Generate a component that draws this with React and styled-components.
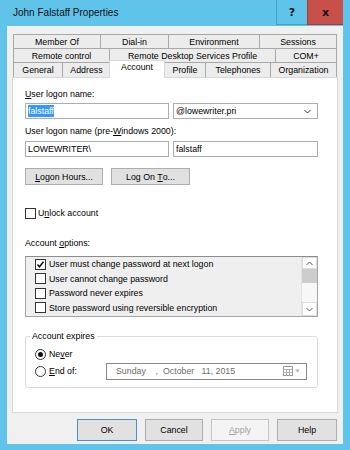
import styled, { createGlobalStyle } from 'styled-components';

const FONT = `"Liberation Sans", Arial, sans-serif`;

const GlobalStyle = createGlobalStyle`
  body {
    margin: 0;
    background: #ffffff;
    font-family: ${FONT};
  }
`;

const Window = styled.div`
  width: 350px;
  height: 450px;
  box-sizing: border-box;
  display: flex;
  flex-direction: column;
  background: #5fc3ea;
  padding: 0 7px 6px 7px;
  font-family: ${FONT};
  font-size: 8.8px;
  color: #000;
`;

const TitleBar = styled.div`
  height: 26px;
  display: flex;
  align-items: flex-start;
`;

const Title = styled.div`
  flex: 1;
  padding: 7px 0 0 6px;
  font-size: 10px;
  line-height: 12px;
  color: #111;
`;

const CaptionButton = styled.div`
  width: ${(p) => p.$w}px;
  height: 25px;
  display: flex;
  align-items: center;
  justify-content: center;
  background: ${(p) => p.$bg};
  box-sizing: border-box;
  border-left: 1px solid ${(p) => p.$edge};
  border-bottom: 1px solid ${(p) => p.$edge};
  font-family: "DejaVu Sans", sans-serif;
  font-weight: bold;
  font-size: 11px;
  color: #111;
`;

const Body = styled.div`
  flex: 1;
  background: #f0f0f0;
  padding: 8px 5px 3px 5px;
  display: flex;
  flex-direction: column;
`;

const Tabs = styled.div`
  margin: 0 1px;
  display: flex;
  flex-direction: column;
`;

const TabRow = styled.div`
  display: flex;
  height: ${(p) => p.$h}px;
`;

const Tab = styled.div`
  width: ${(p) => p.$w}px;
  box-sizing: border-box;
  border-left: 1px solid #a8a8a8;
  border-top: 1px solid #a8a8a8;
  background: #ececec;
  display: flex;
  align-items: center;
  justify-content: center;
  white-space: nowrap;
  &:last-child {
    border-right: 1px solid #a8a8a8;
  }
`;

const ActiveTab = styled(Tab)`
  position: relative;
  z-index: 1;
  width: ${(p) => p.$w + 2}px;
  margin: -2px -1px -1px -1px;
  background: #fff;
  border: 1px solid #d9d9d9;
  border-bottom: none;
  align-items: flex-start;
  padding-top: 1px;
`;

const Panel = styled.div`
  height: 336px;
  box-sizing: border-box;
  background: #fff;
  border: 1px solid #d9d9d9;
  padding: 10px 0 0 12px;
  display: flex;
  flex-direction: column;
`;

const Column = styled.div`
  width: 293px;
  display: flex;
  flex-direction: column;
`;

const Label = styled.div`
  line-height: 12px;
  height: 12px;
  margin-top: ${(p) => p.$mt || 0}px;
  white-space: nowrap;
`;

const FieldRow = styled.div`
  display: flex;
  gap: 4px;
  margin-top: ${(p) => p.$mt || 0}px;
`;

const TextBox = styled.div`
  width: ${(p) => p.$w}px;
  height: 16px;
  box-sizing: border-box;
  border: 1px solid #abadb3;
  background: #fff;
  display: flex;
  align-items: center;
  padding: 0 2px;
  white-space: nowrap;
`;

const Selected = styled.span`
  background: #3399ff;
  color: #fff;
  line-height: 12px;
`;

const Combo = styled(TextBox)`
  justify-content: space-between;
  padding-right: 6px;
`;

const ButtonRow = styled.div`
  display: flex;
  gap: ${(p) => p.$gap}px;
  margin-top: ${(p) => p.$mt || 0}px;
  margin-right: ${(p) => p.$mr || 0}px;
  justify-content: ${(p) => p.$justify || 'flex-start'};
`;

const Button = styled.div`
  width: ${(p) => p.$w}px;
  height: ${(p) => p.$h}px;
  box-sizing: border-box;
  background: ${(p) => (p.$disabled ? '#f4f4f4' : '#e1e1e1')};
  border: 1px solid
    ${(p) => (p.$default ? '#4a90d0' : p.$disabled ? '#c4c4c4' : '#adadad')};
  color: ${(p) => (p.$disabled ? '#a0a0a0' : '#000')};
  display: flex;
  align-items: center;
  justify-content: center;
  white-space: pre;
`;

const CheckRow = styled.div`
  display: flex;
  align-items: center;
  gap: ${(p) => p.$gap || 3}px;
  height: ${(p) => p.$h || 12}px;
  margin-top: ${(p) => p.$mt || 0}px;
  white-space: nowrap;
`;

const Box = styled.span`
  width: 11px;
  height: 11px;
  box-sizing: border-box;
  border: 1px solid #333;
  background: #fff;
  display: flex;
  align-items: center;
  justify-content: center;
  flex-shrink: 0;
`;

const Radio = styled.span`
  width: 11px;
  height: 11px;
  box-sizing: border-box;
  border: 1px solid #333;
  border-radius: 50%;
  background: #fff;
  display: flex;
  align-items: center;
  justify-content: center;
  flex-shrink: 0;
  &::after {
    content: '';
    width: 5px;
    height: 5px;
    border-radius: 50%;
    background: ${(p) => (p.$on ? '#111' : 'transparent')};
  }
`;

const ListBox = styled.div`
  margin-top: 7px;
  height: 61px;
  box-sizing: border-box;
  border: 1px solid #a6a6a6;
  border-top-color: #8c8c8c;
  background: #efefef;
  display: flex;
`;

const ListItems = styled.div`
  flex: 1;
  padding-left: 9px;
  display: flex;
  flex-direction: column;
`;

const ListItem = styled(CheckRow)`
  height: 14.5px;
`;

const ScrollBar = styled.div`
  width: 15px;
  background: #f7f7f7;
  border-left: 1px solid #e2e2e2;
  display: flex;
  flex-direction: column;
`;

const ScrollArrow = styled.div`
  height: ${(p) => p.$h}px;
  background: #fff;
  border: 1px solid #dcdcdc;
  box-sizing: border-box;
  display: flex;
  align-items: center;
  justify-content: center;
`;

const Thumb = styled.div`
  height: 14px;
  background: #cdcdcd;
`;

const Track = styled.div`
  flex: 1;
`;

const Group = styled.fieldset`
  margin: 13px 0 0 0;
  padding: 6px 0 8px 9px;
  border: 1px solid #dcdcdc;
  border-radius: 3px;
  display: flex;
  flex-direction: column;
`;

const Legend = styled.legend`
  padding: 0 2px;
  margin-left: -5px;
  line-height: 12px;
`;

const DateRow = styled.div`
  display: flex;
  align-items: center;
  margin-top: 3px;
  height: 16px;
`;

const DateLabel = styled(CheckRow)`
  width: 71px;
`;

const DatePicker = styled.div`
  width: 201px;
  height: 17px;
  box-sizing: border-box;
  border: 1px solid #8a8a8a;
  background: #fff;
  display: flex;
  align-items: center;
  justify-content: space-between;
  padding: 0 4px 0 9px;
  color: #6d6d6d;
  white-space: pre;
`;

const U = styled.span`
  text-decoration: underline;
`;

const Chevron = ({ up, color = '#333' }) => (
  <svg width="7" height="5" viewBox="0 0 7 5">
    <polyline
      points={up ? '0.5,4 3.5,1 6.5,4' : '0.5,1 3.5,4 6.5,1'}
      fill="none"
      stroke={color}
      strokeWidth="1"
    />
  </svg>
);

const Check = () => (
  <svg width="9" height="9" viewBox="0 0 9 9">
    <polyline points="1.5,4.5 3.5,6.8 7.5,1.8" fill="none" stroke="#111" strokeWidth="1.5" />
  </svg>
);

const CalendarIcon = () => (
  <svg width="19" height="10" viewBox="0 0 19 10">
    <rect x="0.5" y="0.5" width="9" height="9" fill="#fff" stroke="#9a9a9a" />
    <path d="M0.5 3.5H9.5M0.5 6.5H9.5M3.5 3.5V9.5M6.5 3.5V9.5" stroke="#b0b0b0" />
    <polygon points="12,3.5 17,3.5 14.5,6.5" fill="#b5b5b5" />
  </svg>
);

const rows = [
  [
    ['Member Of', 87],
    ['Dial-in', 68],
    ['Environment', 91],
    ['Sessions', 78],
  ],
  [
    ['Remote control', 96],
    ['Remote Desktop Services Profile', 166],
    ['COM+', 62],
  ],
  [
    ['General', 49],
    ['Address', 48],
    ['Account', 54, true],
    ['Profile', 41],
    ['Telephones', 65],
    ['Organization', 67],
  ],
];

const options = [
  ['User must change password at next logon', true],
  ['User cannot change password', false],
  ['Password never expires', false],
  ['Store password using reversible encryption', false],
];

export default function App() {
  return (
    <>
      <GlobalStyle />
      <Window>
        <TitleBar>
          <Title>John Falstaff Properties</Title>
          <CaptionButton $w={31} $bg="#5fc3ea" $edge="#3d9fcc">
            ?
          </CaptionButton>
          <CaptionButton $w={36} $bg="#c8504a" $edge="#a63c37">
            x
          </CaptionButton>
        </TitleBar>
        <Body>
          <Tabs>
            {rows.map((row, i) => (
              <TabRow key={i} $h={i === 2 ? 15 : 14}>
                {row.map(([name, w, active]) =>
                  active ? (
                    <ActiveTab key={name} $w={w}>
                      {name}
                    </ActiveTab>
                  ) : (
                    <Tab key={name} $w={w}>
                      {name}
                    </Tab>
                  )
                )}
              </TabRow>
            ))}
          </Tabs>
          <Panel>
            <Column>
              <Label>
                <U>U</U>ser logon name:
              </Label>
              <FieldRow $mt={3}>
                <TextBox $w={144}>
                  <Selected>falstaff</Selected>
                </TextBox>
                <Combo $w={145}>
                  <span>@lowewriter.pri</span>
                  <Chevron />
                </Combo>
              </FieldRow>
              <Label $mt={6}>
                User logon name (pre-<U>W</U>indows 2000):
              </Label>
              <FieldRow $mt={4}>
                <TextBox $w={144}>LOWEWRITER\</TextBox>
                <TextBox $w={145}>falstaff</TextBox>
              </FieldRow>
              <ButtonRow $gap={8} $mt={11}>
                <Button $w={78} $h={17}>
                  <U>L</U>ogon Hours...
                </Button>
                <Button $w={79} $h={17}>
                  {'Log On '}
                  <U>T</U>o...
                </Button>
              </ButtonRow>
              <CheckRow $mt={22} $gap={2}>
                <Box />
                <span>
                  U<U>n</U>lock account
                </span>
              </CheckRow>
              <Label $mt={18}>
                Account <U>o</U>ptions:
              </Label>
              <ListBox>
                <ListItems>
                  {options.map(([text, on]) => (
                    <ListItem key={text}>
                      <Box>{on && <Check />}</Box>
                      <span>{text}</span>
                    </ListItem>
                  ))}
                </ListItems>
                <ScrollBar>
                  <ScrollArrow $h={12}>
                    <Chevron up color="#555" />
                  </ScrollArrow>
                  <Thumb />
                  <Track />
                  <ScrollArrow $h={14}>
                    <Chevron color="#555" />
                  </ScrollArrow>
                </ScrollBar>
              </ListBox>
              <Group>
                <Legend>Account expires</Legend>
                <CheckRow>
                  <Radio $on />
                  <span>
                    Ne<U>v</U>er
                  </span>
                </CheckRow>
                <DateRow>
                  <DateLabel>
                    <Radio />
                    <span>
                      <U>E</U>nd of:
                    </span>
                  </DateLabel>
                  <DatePicker>
                    <span>{'Sunday    ,  October   11, 2015'}</span>
                    <CalendarIcon />
                  </DatePicker>
                </DateRow>
              </Group>
            </Column>
          </Panel>
          <ButtonRow $gap={8} $mt={6} $mr={1} $justify="flex-end">
            <Button $w={60} $h={22} $default>
              OK
            </Button>
            <Button $w={58} $h={22}>
              Cancel
            </Button>
            <Button $w={58} $h={22} $disabled>
              <U>A</U>pply
            </Button>
            <Button $w={60} $h={22}>
              Help
            </Button>
          </ButtonRow>
        </Body>
      </Window>
    </>
  );
}
